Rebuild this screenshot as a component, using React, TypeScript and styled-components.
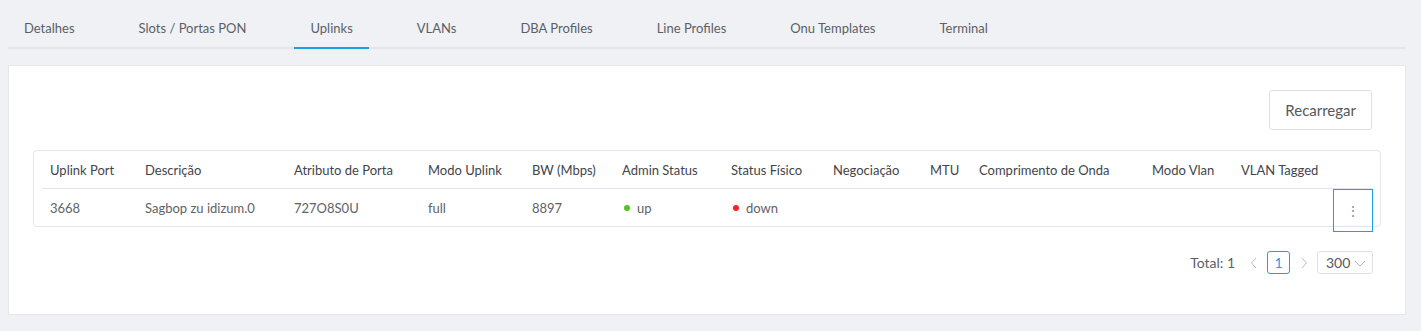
import styled, { createGlobalStyle } from 'styled-components';

const GlobalStyle = createGlobalStyle`
  html, body {
    margin: 0;
    padding: 0;
    background: #f0f1f5;
  }
  body {
    font-family: Lato, "Noto Sans", sans-serif;
    font-size: 13px;
    color: #606266;
  }
`;

const Page = styled.div`
  padding: 8px 15px 16px 8px;
`;

const TabBar = styled.div`
  display: flex;
  height: 39px;
  border-bottom: 2px solid #e4e6eb;
  margin-bottom: 16px;
`;

const Tab = styled.div<{ active?: boolean }>`
  position: relative;
  padding: 0 16px;
  margin-right: 32px;
  display: flex;
  align-items: center;
  height: 39px;
  color: #5c5f66;
  cursor: pointer;
  &::after {
    content: '';
    position: absolute;
    left: 0;
    right: 0;
    bottom: -2px;
    height: 2px;
    background: ${({ active }) => (active ? '#1a9fe0' : 'transparent')};
  }
`;

const Card = styled.div`
  background: #fff;
  border: 1px solid #e6e7eb;
  padding: 24px 24px 40px 24px;
`;

const Toolbar = styled.div`
  display: flex;
  justify-content: flex-end;
  padding-right: 9px;
  margin-bottom: 20px;
`;

const Button = styled.button`
  height: 40px;
  padding: 0 15px;
  background: #fff;
  border: 1px solid #dcdfe6;
  border-radius: 3px;
  font-family: inherit;
  font-size: 15px;
  color: #55585e;
  cursor: pointer;
`;

const TableBox = styled.div`
  border: 1px solid #e4e6eb;
  border-radius: 4px;
  padding: 0 8px;
`;

const Row = styled.div<{ head?: boolean }>`
  display: grid;
  grid-template-columns: 95px 149px 134px 104px 90px 109px 102px 97px 49px 173px 89px 100px 40px;
  height: 37px;
  align-items: center;
  color: ${({ head }) => (head ? '#42454b' : '#606266')};
  border-bottom: ${({ head }) => (head ? '1px solid #e4e6eb' : 'none')};
`;

const Cell = styled.div`
  padding-left: 8px;
  white-space: nowrap;
`;

const Dot = styled.span<{ color: string }>`
  display: inline-block;
  width: 6px;
  height: 6px;
  border-radius: 50%;
  background: ${({ color }) => color};
  margin: 0 7px 2px 2px;
  vertical-align: middle;
`;

const ActionCell = styled.div`
  position: relative;
  align-self: stretch;
  border: 1px solid #1aa0e6;
  margin-bottom: -6px;
  display: flex;
  align-items: center;
  justify-content: center;
  color: #8a8d93;
  font-size: 14px;
`;

const Pager = styled.div`
  display: flex;
  justify-content: flex-end;
  align-items: center;
  margin-top: 24px;
  padding-right: 8px;
`;

const Total = styled.span`
  color: #5c5f66;
  font-size: 14px;
  margin-right: 5px;
`;

const Arrow = styled.span`
  width: 27px;
  display: flex;
  justify-content: center;
  color: #b8bbc2;
`;

const PageNum = styled.span`
  width: 23px;
  height: 23px;
  box-sizing: border-box;
  border: 1px solid #1aa0e6;
  border-radius: 3px;
  color: #1aa0e6;
  font-size: 14px;
  display: flex;
  align-items: center;
  justify-content: center;
`;

const Select = styled.div`
  width: 56px;
  height: 23px;
  border: 1px solid #dcdfe6;
  border-radius: 3px;
  display: flex;
  align-items: center;
  justify-content: space-between;
  padding: 0 6px 0 8px;
  box-sizing: border-box;
  color: #55585e;
  font-size: 14px;
`;

const SelectCaret = styled.span`
  display: flex;
  color: #b8bbc2;
`;

const tabs = ['Detalhes', 'Slots / Portas PON', 'Uplinks', 'VLANs', 'DBA Profiles', 'Line Profiles', 'Onu Templates', 'Terminal'];
const headers = ['Uplink Port', 'Descrição', 'Atributo de Porta', 'Modo Uplink', 'BW (Mbps)', 'Admin Status', 'Status Físico', 'Negociação', 'MTU', 'Comprimento de Onda', 'Modo Vlan', 'VLAN Tagged'];

const Chevron = ({ dir }: { dir: 'left' | 'right' | 'down' }) => {
  const d = dir === 'left' ? 'M8 1 L3.5 6 L8 11' : dir === 'right' ? 'M4 1 L8.5 6 L4 11' : 'M1 4 L6 9 L11 4';
  return (
    <svg width="12" height="12" viewBox="0 0 12 12">
      <path d={d} fill="none" stroke="currentColor" strokeWidth="1" />
    </svg>
  );
};

export default function App() {
  return (
    <Page>
      <GlobalStyle />
      <TabBar>
        {tabs.map((t) => (
          <Tab key={t} active={t === 'Uplinks'}>{t}</Tab>
        ))}
      </TabBar>
      <Card>
        <Toolbar>
          <Button>Recarregar</Button>
        </Toolbar>
        <TableBox>
          <Row head>
            {headers.map((h) => (
              <Cell key={h}>{h}</Cell>
            ))}
            <Cell />
          </Row>
          <Row>
            <Cell>3668</Cell>
            <Cell>Sagbop zu idizum.0</Cell>
            <Cell>727O8S0U</Cell>
            <Cell>full</Cell>
            <Cell>8897</Cell>
            <Cell><Dot color="#52c41a" />up</Cell>
            <Cell><Dot color="#f5222d" />down</Cell>
            <Cell />
            <Cell />
            <Cell />
            <Cell />
            <Cell />
            <ActionCell>⋮</ActionCell>
          </Row>
        </TableBox>
        <Pager>
          <Total>Total: 1</Total>
          <Arrow><Chevron dir="left" /></Arrow>
          <PageNum>1</PageNum>
          <Arrow><Chevron dir="right" /></Arrow>
          <Select>
            300
            <SelectCaret><Chevron dir="down" /></SelectCaret>
          </Select>
        </Pager>
      </Card>
    </Page>
  );
}
